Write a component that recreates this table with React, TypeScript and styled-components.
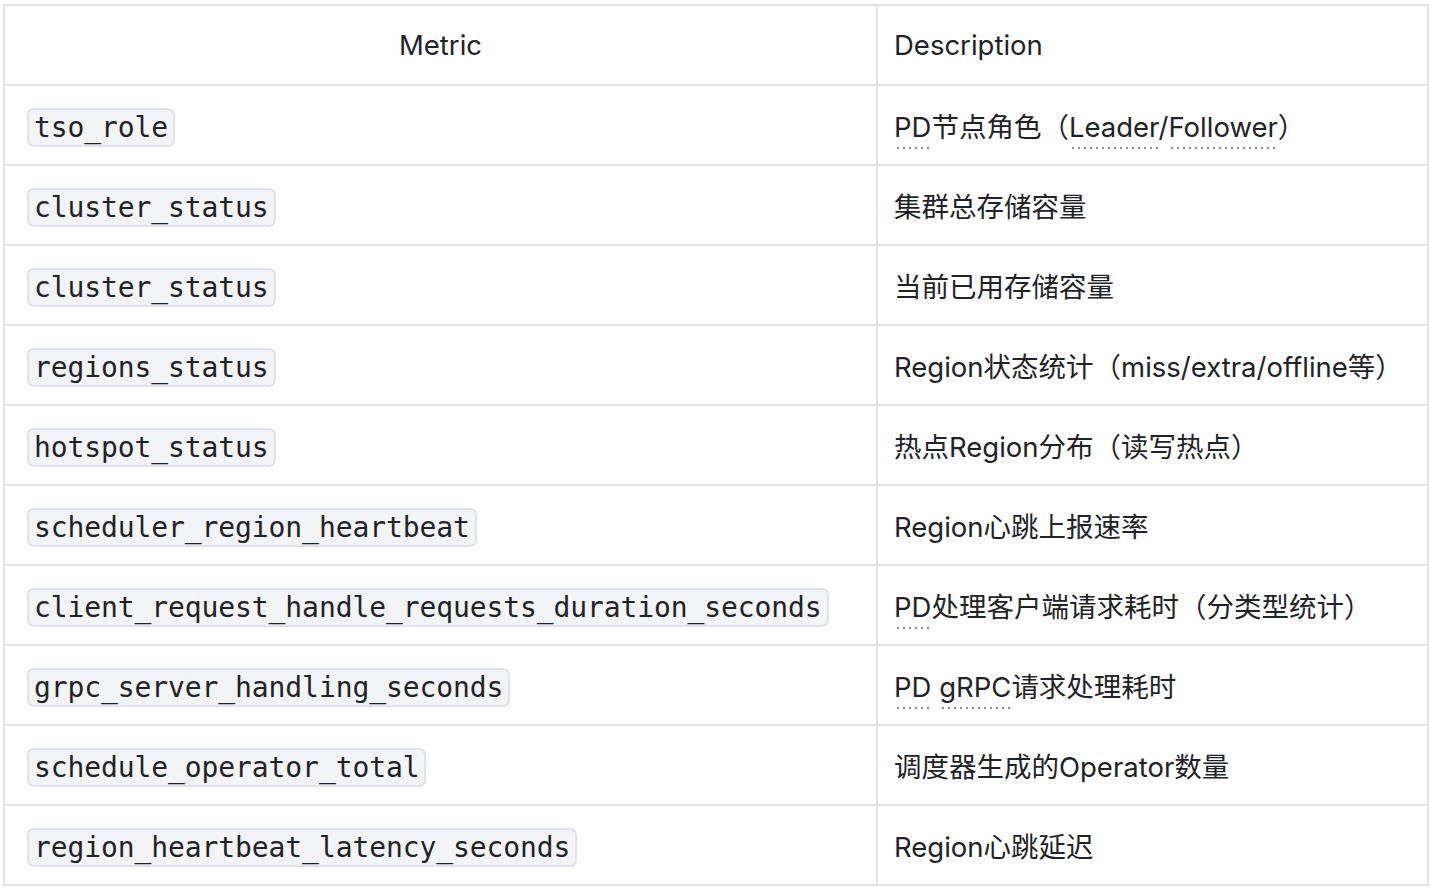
import React from "react";
import styled, { createGlobalStyle } from "styled-components";

const GlobalStyle = createGlobalStyle`
  body {
    margin: 0;
    background: #ffffff;
    font-family: Inter, "Noto Sans CJK SC", sans-serif;
    color: #1f2328;
  }
`;

const Page = styled.div`
  padding: 4px 5px 4px 3px;
`;

const Table = styled.table`
  width: 100%;
  border-collapse: collapse;
  table-layout: fixed;
  font-size: 27.5px;
`;

const Th = styled.th<{ $align?: string }>`
  height: 78px;
  padding: 0 16px;
  border: 2px solid #e1e1e6;
  font-weight: 400;
  text-align: ${({ $align }) => $align || "left"};
`;

const Td = styled.td<{ $code?: boolean }>`
  height: 78px;
  padding: ${({ $code }) => ($code ? "0 22px" : "0 16px")};
  border: 2px solid #e1e1e6;
  white-space: nowrap;
`;

const Code = styled.code`
  display: inline-block;
  vertical-align: middle;
  margin-top: 4px;
  font-family: "DejaVu Sans Mono", monospace;
  font-size: 28px;
  letter-spacing: -0.1px;
  line-height: 35px;
  padding: 0 5px;
  background: #f3f4f6;
  border: 2px solid #e2e3e7;
  border-radius: 7px;
  color: #1f2328;
`;

const Dotted = styled.span`
  padding-bottom: 5px;
  background-image: linear-gradient(to right, #8a8d93 2px, transparent 2px);
  background-size: 6px 2px;
  background-repeat: repeat-x;
  background-position: 3px 100%;
`;

type Row = { metric: string; desc: React.ReactNode };

const rows: Row[] = [
  {
    metric: "tso_role",
    desc: (
      <>
        <Dotted>PD</Dotted>节点角色（<Dotted>Leader</Dotted>/<Dotted>Follower</Dotted>）
      </>
    ),
  },
  { metric: "cluster_status", desc: "集群总存储容量" },
  { metric: "cluster_status", desc: "当前已用存储容量" },
  { metric: "regions_status", desc: "Region状态统计（miss/extra/offline等）" },
  { metric: "hotspot_status", desc: "热点Region分布（读写热点）" },
  { metric: "scheduler_region_heartbeat", desc: "Region心跳上报速率" },
  {
    metric: "client_request_handle_requests_duration_seconds",
    desc: (
      <>
        <Dotted>PD</Dotted>处理客户端请求耗时（分类型统计）
      </>
    ),
  },
  {
    metric: "grpc_server_handling_seconds",
    desc: (
      <>
        <Dotted>PD</Dotted> <Dotted>gRPC</Dotted>请求处理耗时
      </>
    ),
  },
  { metric: "schedule_operator_total", desc: "调度器生成的Operator数量" },
  { metric: "region_heartbeat_latency_seconds", desc: "Region心跳延迟" },
];

const App: React.FC = () => (
  <Page>
    <GlobalStyle />
    <Table>
      <colgroup>
        <col style={{ width: 873 }} />
        <col />
      </colgroup>
      <thead>
        <tr>
          <Th $align="center">Metric</Th>
          <Th>Description</Th>
        </tr>
      </thead>
      <tbody>
        {rows.map((row, i) => (
          <tr key={i}>
            <Td $code>
              <Code>{row.metric}</Code>
            </Td>
            <Td>{row.desc}</Td>
          </tr>
        ))}
      </tbody>
    </Table>
  </Page>
);

export default App;
